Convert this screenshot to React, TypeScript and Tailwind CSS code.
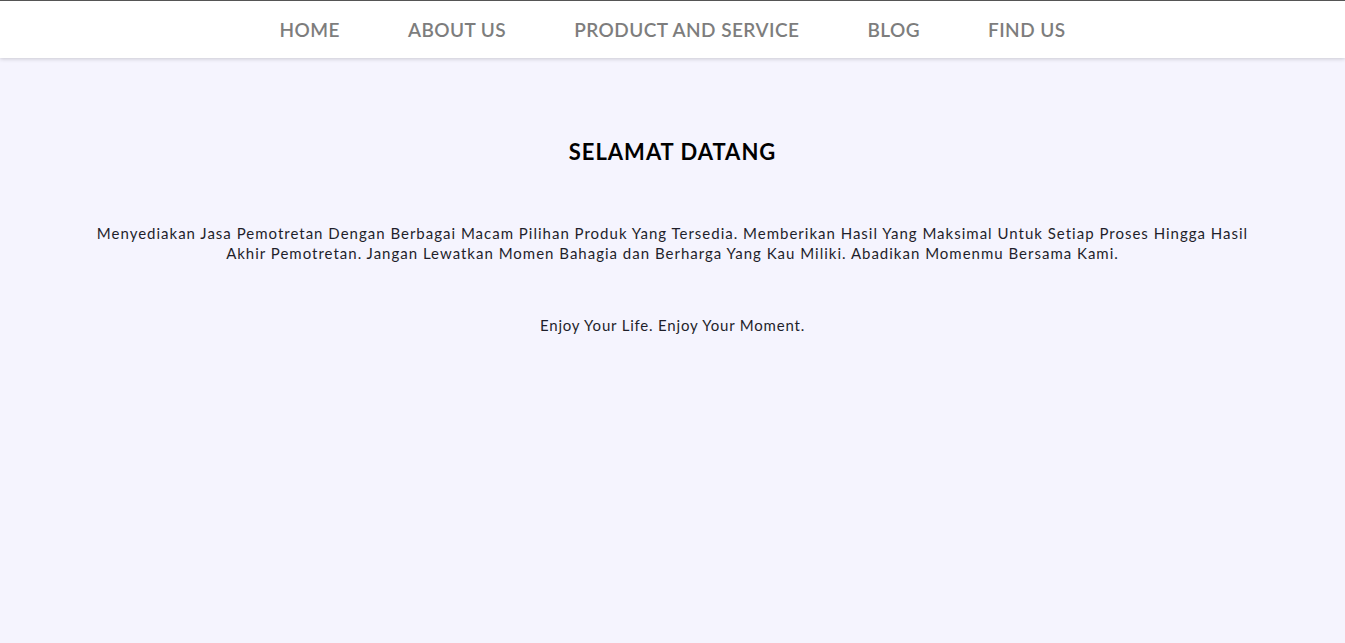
const links = ["HOME", "ABOUT US", "PRODUCT AND SERVICE", "BLOG", "FIND US"];

const App = () => {
  return (
    <div className="min-h-screen bg-[#f5f4fe] font-['Lato','Noto_Sans',sans-serif] text-[#1f1f2b]">
      <nav className="bg-white border-t border-[#555] shadow-[0_1px_4px_rgba(0,0,0,0.18)]">
        <ul className="flex justify-center items-center gap-[68px] h-[57px] pt-[2px]">
          {links.map((l) => (
            <li key={l} className="text-[19px] font-semibold text-[#7d7d7d] tracking-[0.45px]">
              {l}
            </li>
          ))}
        </ul>
      </nav>
      <section className="flex flex-col items-center text-center pt-[77px]">
        <h1 className="text-[22px] font-bold text-black tracking-[1px]">SELAMAT DATANG</h1>
        <p className="mt-[55px] text-[15px] leading-[20px] tracking-[1px]">
          Menyediakan Jasa Pemotretan Dengan Berbagai Macam Pilihan Produk Yang Tersedia. Memberikan Hasil Yang Maksimal Untuk Setiap Proses Hingga Hasil
          <br />
          Akhir Pemotretan. Jangan Lewatkan Momen Bahagia dan Berharga Yang Kau Miliki. Abadikan Momenmu Bersama Kami.
        </p>
        <p className="mt-[52px] text-[15px] leading-[20px] tracking-[0.8px]">Enjoy Your Life. Enjoy Your Moment.</p>
      </section>
    </div>
  );
};

export default App;
